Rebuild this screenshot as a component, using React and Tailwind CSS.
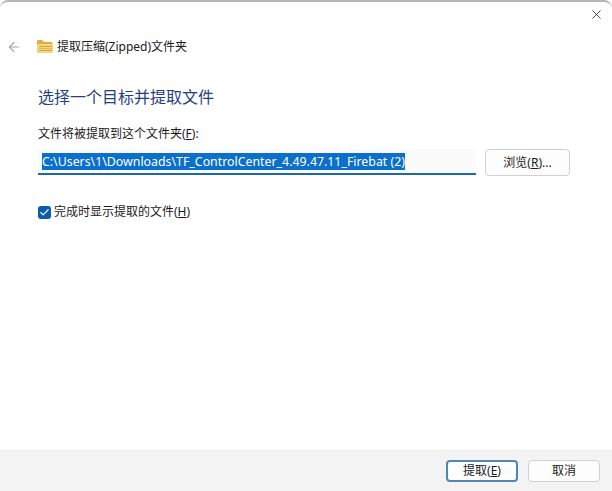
import React from 'react';
import { ArrowLeft, X, Check } from 'lucide-react';

function FolderIcon() {
    return (
        <svg className="w-[17px] h-[16px]" viewBox="0 0 17 16">
            <path d="M1 2.5A1.5 1.5 0 012.5 1H6l2 2h7a1.5 1.5 0 011.5 1.5V13a1 1 0 01-1 1H2a1 1 0 01-1-1z" fill="#e3ad3c" />
            <rect x="1" y="5" width="15.5" height="9" rx="1" fill="#f8d775" />
            <rect x="3" y="7" width="13" height="1" fill="#c9a453" />
            <rect x="3" y="9" width="13" height="1" fill="#d9b968" />
            <rect x="3" y="11" width="13" height="1" fill="#c9a453" />
        </svg>
    );
}

export default function App() {
    return (
        <div
            className="w-[612px] h-[491px] bg-white flex flex-col rounded-t-lg border-t-2 border-[#b5b5b5] overflow-hidden text-[12px] text-[#1a1a1a]"
            style={{ fontFamily: '"Noto Sans", "Noto Sans CJK SC", sans-serif' }}
        >
            {/* title bar */}
            <div className="h-[28px] flex justify-end pr-[8px] pt-[5px]">
                <X className="w-[15px] h-[15px] text-[#333]" strokeWidth={1.4} />
            </div>

            {/* nav row */}
            <div className="h-[33px] flex items-center pl-[6px]">
                <ArrowLeft className="w-[16px] h-[16px] text-[#a3a3a3]" strokeWidth={1.6} />
                <div className="ml-[14px]">
                    <FolderIcon />
                </div>
                <span className="ml-[4px]">提取压缩(Zipped)文件夹</span>
            </div>

            {/* content */}
            <div className="flex-1 pl-[38px] pr-[41px] pt-[23px]">
                <h1 className="text-[16px] leading-[22px] font-normal text-[#1f3f86]">选择一个目标并提取文件</h1>
                <p className="mt-[18px] leading-[16px]">
                    文件将被提取到这个文件夹(<span className="underline">F</span>):
                </p>
                <div className="flex mt-[7px] gap-[9px]">
                    <div className="w-[438px] h-[26px] bg-[#fbfbfb] border-b-2 border-[#1f6aa5] pl-[4px] pt-[4px]">
                        <span className="block w-fit bg-[#0a70cc] text-white h-[17px] leading-[17px] text-[12.35px]">
                            C:\Users\1\Downloads\TF_ControlCenter_4.49.47.11_Firebat (2)
                        </span>
                    </div>
                    <button className="w-[85px] h-[27px] bg-[#fdfdfd] border border-[#d0d0d0] rounded-[4px]">
                        浏览(<span className="underline">R</span>)...
                    </button>
                </div>
                <div className="flex items-center mt-[27px]">
                    <div className="w-[13px] h-[13px] bg-[#0b5cad] rounded-[3px] flex items-center justify-center">
                        <Check className="w-[11px] h-[11px] text-white" strokeWidth={2.5} />
                    </div>
                    <span className="ml-[3px]">
                        完成时显示提取的文件(<span className="underline">H</span>)
                    </span>
                </div>
            </div>

            {/* footer */}
            <div className="h-[41px] bg-[#f3f3f3] border-t border-[#ebebeb] flex justify-end items-center gap-[10px] pr-[12px]">
                <button className="w-[72px] h-[22px] bg-[#fdfdfd] border-2 border-[#4f86b5] rounded-[4px] flex items-center justify-center">
                    提取(<span className="underline">E</span>)
                </button>
                <button className="w-[72px] h-[22px] bg-[#fdfdfd] border border-[#d0d0d0] rounded-[4px]">取消</button>
            </div>
        </div>
    );
}
